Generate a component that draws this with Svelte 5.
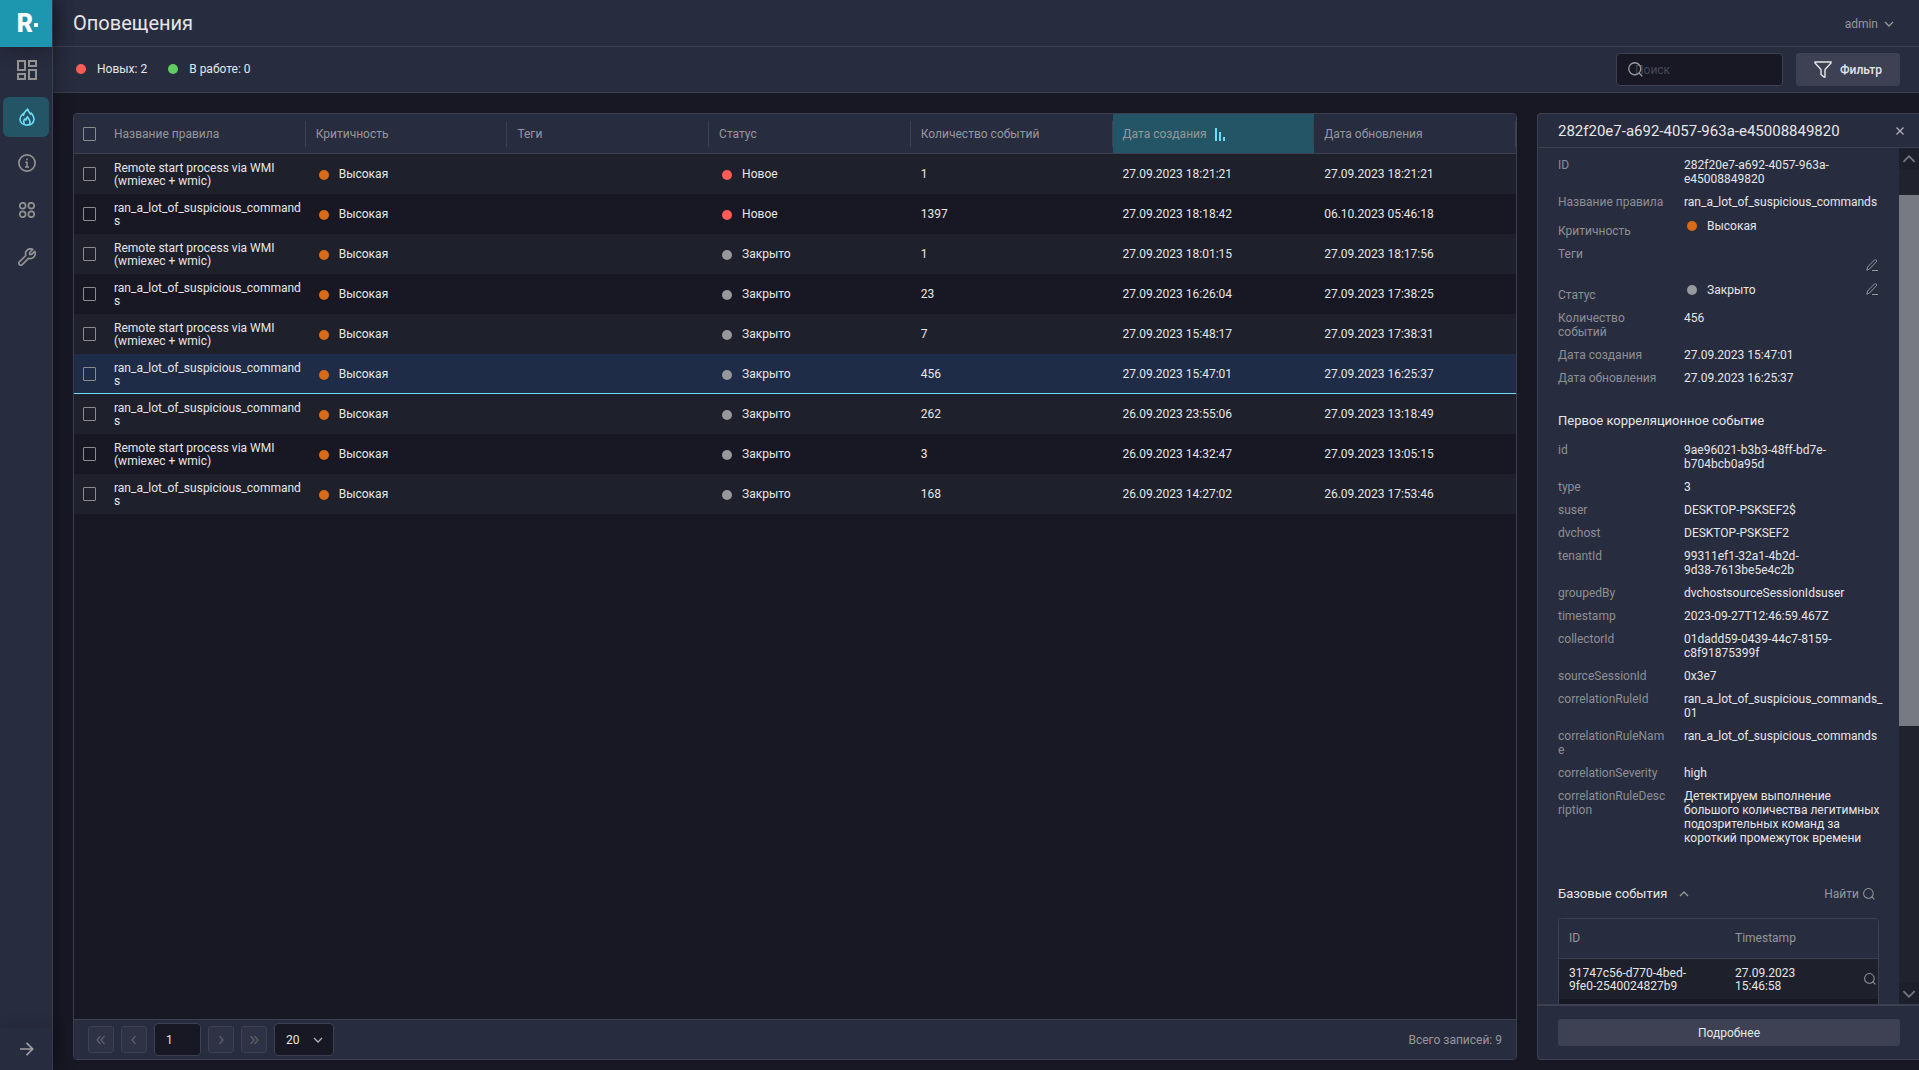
<script>
	const columns = ["Название правила", "Критичность", "Теги", "Статус", "Количество событий", "Дата создания", "Дата обновления"];
	const sortedColumn = "Дата создания";

	const wmi = "Remote start process via WMI (wmiexec + wmic)";
	const commands = "ran_a_lot_of_suspicious_commands";

	const alerts = [
		{ rule: wmi, status: "Новое", count: 1, created: "27.09.2023 18:21:21", updated: "27.09.2023 18:21:21" },
		{ rule: commands, status: "Новое", count: 1397, created: "27.09.2023 18:18:42", updated: "06.10.2023 05:46:18" },
		{ rule: wmi, status: "Закрыто", count: 1, created: "27.09.2023 18:01:15", updated: "27.09.2023 18:17:56" },
		{ rule: commands, status: "Закрыто", count: 23, created: "27.09.2023 16:26:04", updated: "27.09.2023 17:38:25" },
		{ rule: wmi, status: "Закрыто", count: 7, created: "27.09.2023 15:48:17", updated: "27.09.2023 17:38:31" },
		{ rule: commands, status: "Закрыто", count: 456, created: "27.09.2023 15:47:01", updated: "27.09.2023 16:25:37" },
		{ rule: commands, status: "Закрыто", count: 262, created: "26.09.2023 23:55:06", updated: "27.09.2023 13:18:49" },
		{ rule: wmi, status: "Закрыто", count: 3, created: "26.09.2023 14:32:47", updated: "27.09.2023 13:05:15" },
		{ rule: commands, status: "Закрыто", count: 168, created: "26.09.2023 14:27:02", updated: "26.09.2023 17:53:46" }
	];

	const correlation = [
		["id", "9ae96021-b3b3-48ff-bd7e-b704bcb0a95d"],
		["type", "3"],
		["suser", "DESKTOP-PSKSEF2$"],
		["dvchost", "DESKTOP-PSKSEF2"],
		["tenantId", "99311ef1-32a1-4b2d-\n9d38-7613be5e4c2b"],
		["groupedBy", "dvchostsourceSessionIdsuser"],
		["timestamp", "2023-09-27T12:46:59.467Z"],
		["collectorId", "01dadd59-0439-44c7-8159-c8f91875399f"],
		["sourceSessionId", "0x3e7"],
		["correlationRuleId", "ran_a_lot_of_suspicious_commands_01"],
		["correlationRuleName", "ran_a_lot_of_suspicious_commands"],
		["correlationSeverity", "high"],
		["correlationRuleDescription", "Детектируем выполнение большого количества легитимных подозрительных команд за короткий промежуток времени"]
	];

	let selected = $state(5);
	let page = $state("1");
	let pageSize = $state("20");
	let search = $state("");
</script>

{#snippet chevron(path, size = 10)}
	<svg width={size} height={size} viewBox="0 0 10 10" fill="none" stroke="currentColor" stroke-width="1.3"><path d={path} /></svg>
{/snippet}

{#snippet loupe(size)}
	<svg width={size} height={size} viewBox="0 0 14 14" fill="none" stroke="currentColor" stroke-width="1.2"><circle cx="6.3" cy="6.3" r="5.6" /><path d="M10.3 10.3L13.3 13.3" /></svg>
{/snippet}

{#snippet pencil()}
	<svg width="12" height="12" viewBox="0 0 12 12" fill="none" stroke="currentColor"><path d="M.8 11.2L1.5 8 8.6 .9Q9.4 .3 10.3 1.1 11.1 2 10.4 2.8L3.4 10.1ZM6 11.5H12" /></svg>
{/snippet}

<div class="app">
	<nav class="sidebar">
		<a class="logo" href="#home" aria-label="Главная"><span>R</span><i></i></a>
		<a class="item" href="#dashboard" aria-label="Дашборд">
			<svg width="20" height="20" viewBox="0 0 20 20" fill="none" stroke="currentColor" stroke-width="2"><path d="M1 1H8V10H1ZM12 1H19V6H12ZM12 10H19V19H12ZM1 14H8V19H1Z" /></svg>
		</a>
		<a class="item active" href="#alerts" aria-label="Оповещения">
			<svg width="16" height="18" viewBox="0 0 16 18" fill="none" stroke="currentColor" stroke-width="1.6" stroke-linejoin="round">
				<path d="M8.6 1C9.2 4 11 4.2 11.4 6.2L12.5 5.2C13.8 7 15.1 8.8 15 11.2 14.8 14.8 12 17.1 8 17.1 4 17.1 1.1 14.8 1 11.2 1 9 2 7.6 3.4 6.2L4.5 7.2C4.6 4.2 6.8 3.2 8.6 1Z" />
				<path d="M5.6 16.5C4.3 14 4.8 11.8 6 11L7 12C7 10.6 7.5 9.6 8.5 8.8 9 10.8 11 11.5 11 13.8 11 15 10.8 15.7 10.3 16.5" />
			</svg>
		</a>
		<a class="item" href="#info" aria-label="Информация">
			<svg width="18" height="18" viewBox="0 0 18 18" fill="none" stroke="currentColor" stroke-width="1.7"><circle cx="9" cy="9" r="8.1" /><path d="M9 4.6V6.3M7.3 8.3H9V13M7 13H11" stroke-width="1.5" /></svg>
		</a>
		<a class="item" href="#sources" aria-label="Источники">
			<svg width="16" height="16" viewBox="0 0 16 16" fill="none" stroke="currentColor" stroke-width="1.7"><circle cx="3.7" cy="3.7" r="2.9" /><circle cx="12.3" cy="3.7" r="2.9" /><circle cx="3.7" cy="12.3" r="2.9" /><circle cx="12.3" cy="12.3" r="2.9" /></svg>
		</a>
		<a class="item" href="#settings" aria-label="Настройки">
			<svg width="18" height="18" viewBox="0 0 18 18" fill="none" stroke="currentColor" stroke-width="1.7" stroke-linejoin="round"><path d="M14.8 1.4L11.7 4.5V6.4H13.6L16.7 3.3C17.7 5.6 17.2 7.7 15.7 9.2 14.2 10.6 12.3 10.9 10.5 10.3L4.2 16.6C3.3 17.5 2.2 17.4 1.4 16.6 .6 15.8 .6 14.7 1.4 13.8L7.8 7.5C7.2 5.7 7.5 3.8 8.9 2.3 10.5 .7 12.7 .4 14.8 1.4Z" /></svg>
		</a>
		<button class="expand" aria-label="Развернуть">
			<svg width="14" height="14" viewBox="0 0 14 14" fill="none" stroke="currentColor" stroke-width="1.7"><path d="M0 7H13M6.5 .8L12.7 7 6.5 13.2" /></svg>
		</button>
	</nav>

	<div class="page">
		<header class="top">
			<h1>Оповещения</h1>
			<button class="user">admin {@render chevron("M1 3L5 7 9 3")}</button>
		</header>

		<div class="toolbar">
			<div class="legend"><i class="dot new"></i>Новых: 2</div>
			<div class="legend"><i class="dot work"></i>В работе: 0</div>
			<label class="search">
				{@render loupe(15)}
				<input type="text" placeholder="Поиск" bind:value={search} />
			</label>
			<button class="filter">
				<svg width="18" height="17" viewBox="0 0 18 17" fill="none" stroke="currentColor" stroke-width="1.4"><path d="M1 1H17V2L11 8.5V16H10L7 13.5V8.5L1 2Z" /></svg>
				Фильтр
			</button>
		</div>

		<div class="content">
			<main class="panel">
				<div class="scroll">
					<table class="alerts">
						<thead>
							<tr>
								<th class="check"><input type="checkbox" aria-label="Выбрать все" /></th>
								{#each columns as column}
									<th class:sorted={column === sortedColumn}>
										<div class="head">
											{column}
											{#if column === sortedColumn}
												<svg width="10" height="13" viewBox="0 0 10 13" fill="#6fdcf5"><path d="M0 0H2V13H0ZM4 4H6V13H4ZM8 9H10V13H8Z" /></svg>
											{/if}
										</div>
									</th>
								{/each}
							</tr>
						</thead>
						<tbody>
							{#each alerts as alert, i}
								<tr class:selected={i === selected} onclick={() => selected = i}>
									<td class="check"><input type="checkbox" aria-label={alert.rule} /></td>
									<td class="rule">{alert.rule}</td>
									<td><div class="state"><i class="dot high"></i>Высокая</div></td>
									<td></td>
									<td><div class="state"><i class="dot" class:new={alert.status === "Новое"}></i>{alert.status}</div></td>
									<td>{alert.count}</td>
									<td>{alert.created}</td>
									<td>{alert.updated}</td>
								</tr>
							{/each}
						</tbody>
					</table>
				</div>
				<footer class="pager">
					<button disabled aria-label="Первая">{@render chevron("M4.5 1L1 5 4.5 9M8.5 1L5 5 8.5 9")}</button>
					<button disabled aria-label="Назад">{@render chevron("M6.5 1L3 5 6.5 9")}</button>
					<input type="text" aria-label="Страница" bind:value={page} />
					<button disabled aria-label="Вперёд">{@render chevron("M3.5 1L7 5 3.5 9")}</button>
					<button disabled aria-label="Последняя">{@render chevron("M1.5 1L5 5 1.5 9M5.5 1L9 5 5.5 9")}</button>
					<div class="size">
						<select aria-label="Записей на странице" bind:value={pageSize}>
							<option>20</option>
							<option>50</option>
							<option>100</option>
						</select>
						{@render chevron("M1 3L5 7 9 3")}
					</div>
					<span class="total">Всего записей: 9</span>
				</footer>
			</main>

			<aside class="details">
				<div class="details-head">
					<h2>282f20e7-a692-4057-963a-e45008849820</h2>
					<button aria-label="Закрыть">{@render chevron("M1.5 1.5L8.5 8.5M8.5 1.5L1.5 8.5")}</button>
				</div>
				<div class="details-body">
					<div class="fields">
						<dl>
							<div><dt>ID</dt><dd>282f20e7-a692-4057-963a-e45008849820</dd></div>
							<div><dt>Название правила</dt><dd>ran_a_lot_of_suspicious_commands</dd></div>
							<div class="low"><dt>Критичность</dt><dd class="state"><i class="dot high"></i>Высокая</dd></div>
							<div class="tags"><dt>Теги</dt><dd><button class="edit" aria-label="Изменить теги">{@render pencil()}</button></dd></div>
							<div class="low"><dt>Статус</dt><dd class="state"><i class="dot"></i>Закрыто<button class="edit" aria-label="Изменить статус">{@render pencil()}</button></dd></div>
							<div><dt>Количество событий</dt><dd>456</dd></div>
							<div><dt>Дата создания</dt><dd>27.09.2023 15:47:01</dd></div>
							<div><dt>Дата обновления</dt><dd>27.09.2023 16:25:37</dd></div>
						</dl>
						<h3>Первое корреляционное событие</h3>
						<dl>
							{#each correlation as [name, value]}
								<div><dt>{name}</dt><dd>{value}</dd></div>
							{/each}
						</dl>
						<div class="base-head">
							<h3>Базовые события</h3>
							<button aria-label="Свернуть">{@render chevron("M1 7L5 3 9 7")}</button>
							<button class="find">Найти {@render loupe(12)}</button>
						</div>
						<div class="base-box">
							<table class="base">
								<thead>
									<tr><th>ID</th><th>Timestamp</th><th class="action"></th></tr>
								</thead>
								<tbody>
									<tr>
										<td>31747c56-d770-4bed-9fe0-2540024827b9</td>
										<td>27.09.2023 15:46:58</td>
										<td class="action"><button aria-label="Открыть событие">{@render loupe(12)}</button></td>
									</tr>
									<tr><td></td><td></td><td class="action"></td></tr>
								</tbody>
							</table>
						</div>
					</div>
					<div class="scrollbar">
						<div class="arrow">{@render chevron("M1 7L5 3 9 7", 14)}</div>
						<div class="thumb"></div>
						<div class="arrow">{@render chevron("M1 3L5 7 9 3", 14)}</div>
					</div>
				</div>
				<div class="details-foot"><button>Подробнее</button></div>
			</aside>
		</div>
	</div>
</div>

<style>
	:global(body) {
		background: #171824;
	}

	.app {
		display: flex;
		height: 100vh;
		overflow: hidden;
		font: 12px/14px Roboto, "Noto Sans", sans-serif;
		color: #e6e6e6;
	}

	.app * {
		box-sizing: border-box;
	}

	h1, h2, h3, dl, dd {
		margin: 0;
		font-weight: 400;
	}

	svg {
		flex: none;
		display: block;
	}

	button, input, select {
		font: inherit;
		color: inherit;
		margin: 0;
	}

	button {
		display: flex;
		align-items: center;
		justify-content: center;
		background: none;
		border: 0;
		padding: 0;
	}

	/* sidebar */
	.sidebar {
		display: flex;
		flex-direction: column;
		align-items: center;
		flex: none;
		width: 53px;
		background: #282c3f;
		border-right: 1px solid #3d4050;
		box-shadow: 0 0 20px rgba(0, 0, 0, 0.4);
		z-index: 1;
	}

	.logo {
		display: flex;
		align-items: center;
		justify-content: center;
		width: 100%;
		height: 47px;
		margin-bottom: 3px;
		padding-left: 3px;
		background: #1d97b0;
		box-shadow: 0 0 20px rgba(0, 0, 0, 0.4);
		color: #fff;
		font-size: 25px;
		font-weight: 900;
		text-decoration: none;
	}

	.logo i {
		width: 4px;
		height: 4px;
		margin-left: 1px;
		margin-top: 3px;
		background: #fff;
	}

	.item {
		display: flex;
		align-items: center;
		justify-content: center;
		width: 46px;
		height: 40px;
		margin-bottom: 7px;
		padding-left: 2px;
		border-radius: 6px;
		color: #929292;
	}

	.item.active {
		margin-bottom: 6px;
		background: #235567;
		color: #6fdcf5;
	}

	.expand {
		width: 100%;
		height: 42px;
		margin-top: auto;
		padding-left: 2px;
		box-shadow: 0 0 16px rgba(0, 0, 0, 0.15);
		color: #a0a0a2;
	}

	/* page */
	.page {
		display: flex;
		flex-direction: column;
		flex: 1;
		min-width: 0;
	}

	.top, .toolbar {
		display: flex;
		align-items: center;
		height: 47px;
		flex: none;
		padding: 0 19px 0 20px;
		background: #282c3f;
		border-bottom: 1px solid #3d4050;
	}

	.toolbar {
		height: 46px;
	}

	h1 {
		font-size: 20px;
		line-height: 24px;
	}

	.user {
		gap: 6px;
		margin-left: auto;
		margin-right: 6px;
		padding-top: 2px;
		color: #96979b;
	}

	.dot {
		flex: none;
		width: 10px;
		height: 10px;
		border-radius: 50%;
		background: #97989c;
	}

	.dot.new {
		background: #ff5c57;
	}

	.dot.work {
		background: #62cc62;
	}

	.dot.high {
		background: #d96a16;
	}

	.legend {
		display: flex;
		align-items: center;
		gap: 11px;
		padding: 0 0 2px 3px;
		margin-right: 18px;
	}

	.search {
		display: flex;
		align-items: center;
		position: relative;
		width: 167px;
		height: 33px;
		margin-left: auto;
		margin-right: 13px;
		color: #9a9a9e;
	}

	.search svg {
		position: absolute;
		left: 12px;
	}

	.search input {
		width: 100%;
		height: 100%;
		padding: 0 18px;
		background: #171824;
		border: 1px solid #3d4050;
		border-radius: 4px;
	}

	.search input::placeholder {
		color: #454856;
		opacity: 1;
	}

	.filter {
		gap: 8px;
		width: 104px;
		height: 33px;
		background: #3d4153;
		border-radius: 3px;
		font-weight: 500;
	}

	.content {
		display: flex;
		flex: 1;
		gap: 20px;
		min-height: 0;
		padding: 20px 0 10px 20px;
	}

	.panel {
		display: flex;
		flex-direction: column;
		flex: 1;
		min-width: 0;
		border: 1px solid #3d4050;
		border-radius: 4px;
		overflow: hidden;
	}

	.scroll {
		flex: 1;
		min-height: 0;
		overflow: hidden;
	}

	table {
		width: 100%;
		table-layout: fixed;
		border-collapse: separate;
		border-spacing: 0;
		line-height: 13px;
	}

	th {
		height: 40px;
		padding: 0;
		background: #282c3f;
		border-bottom: 1px solid #3d4050;
		color: #96979b;
		font-weight: 400;
		text-align: left;
	}

	.head {
		display: flex;
		align-items: center;
		gap: 8px;
		height: 26px;
		padding: 1px 0 0 10px;
		border-right: 1px solid #3d4050;
	}

	th.sorted {
		background: #235567;
	}

	td {
		height: 40px;
		padding: 1px 10px 0;
		overflow-wrap: anywhere;
	}

	.rule {
		padding-right: 4px;
	}

	tbody tr {
		background: #171824;
	}

	tbody tr:nth-child(odd) {
		background: #1e202c;
	}

	tbody tr.selected {
		background: #1e2c47;
	}

	.selected td {
		box-shadow: inset 0 -1px #6fdcf5;
	}

	.check {
		width: 30px;
		padding: 0 0 0 9px;
	}

	input[type="checkbox"] {
		display: block;
		appearance: none;
		width: 13px;
		height: 14px;
		border: 1px solid #8a8a8a;
		border-radius: 1px;
	}

	.state {
		display: flex;
		align-items: center;
		gap: 10px;
		padding-left: 3px;
	}

	.pager {
		display: flex;
		align-items: center;
		gap: 7px;
		height: 40px;
		padding: 0 14px;
		background: #282c3f;
		border-top: 1px solid #3d4050;
	}

	.pager button {
		width: 26px;
		height: 27px;
		background: #2e3244;
		border: 1px solid #3d4050;
		border-radius: 3px;
		color: #5d5e66;
	}

	.pager input, .pager select {
		width: 47px;
		height: 33px;
		padding: 0 11px;
		background: #171824;
		border: 1px solid #3d4050;
		border-radius: 4px;
	}

	.size {
		display: flex;
		align-items: center;
		position: relative;
	}

	.pager select {
		appearance: none;
		width: 60px;
	}

	.size svg {
		position: absolute;
		right: 11px;
		pointer-events: none;
		color: #b0b0b4;
	}

	.total {
		margin-left: auto;
		color: #96979b;
	}

	/* details */
	.details {
		display: flex;
		flex-direction: column;
		flex: none;
		width: 382px;
		background: #282c3f;
		border: 1px solid #3d4050;
		border-right: 0;
		border-radius: 4px 0 0 4px;
		overflow: hidden;
	}

	.details-head {
		display: flex;
		align-items: center;
		justify-content: space-between;
		flex: none;
		height: 34px;
		padding: 0 14px 0 20px;
		border-bottom: 1px solid #3d4050;
	}

	.details-head button {
		color: #b0b0b4;
	}

	h2 {
		font-size: 15px;
		line-height: 18px;
	}

	.details-body {
		display: flex;
		flex: 1;
		min-height: 0;
	}

	.fields {
		flex: 1;
		min-width: 0;
		padding: 10px 12px 0 20px;
		overflow: hidden;
	}

	dl {
		display: flex;
		flex-direction: column;
		gap: 9px;
	}

	dl > div {
		display: grid;
		grid-template-columns: 110px 1fr;
		gap: 16px;
	}

	dt {
		color: #8e8f94;
		overflow-wrap: anywhere;
	}

	dd {
		overflow-wrap: anywhere;
		white-space: pre-line;
	}

	dl > .low {
		min-height: 20px;
	}

	.low dt {
		align-self: end;
	}

	.low dd {
		align-self: start;
		height: 16px;
	}

	dl > .tags {
		min-height: 26px;
	}

	.tags dd {
		display: flex;
		align-items: end;
	}

	.edit {
		margin-left: auto;
		margin-right: 9px;
		padding-bottom: 2px;
		color: #96979b;
	}

	h3 {
		font-size: 13px;
		line-height: 16px;
		margin: 28px 0 14px;
	}

	.base-head {
		display: flex;
		align-items: center;
		gap: 12px;
		margin: 41px 8px 16px 0;
		color: #96979b;
	}

	.base-head h3 {
		margin: 0;
		color: #e6e6e6;
	}

	.find {
		gap: 4px;
		margin-left: auto;
		margin-right: 4px;
	}

	.base-box {
		margin-right: 8px;
		border: 1px solid #3d4050;
		border-radius: 4px;
		overflow: hidden;
	}

	.base th {
		padding: 0 10px;
	}

	.base .action {
		width: 24px;
		padding: 0 2px 0 0;
	}

	.base .action button {
		margin-left: auto;
		color: #96979b;
	}

	.base th:first-child {
		width: 166px;
	}

	.base td:first-child {
		padding-right: 30px;
	}

	.base td:nth-child(2) {
		padding-right: 50px;
	}

	.scrollbar {
		display: flex;
		flex-direction: column;
		flex: none;
		width: 20px;
		background: #20222e;
	}

	.arrow {
		display: flex;
		align-items: center;
		justify-content: center;
		height: 21px;
		background: #1d1f2a;
		color: #777982;
	}

	.arrow:last-child {
		margin-top: auto;
	}

	.thumb {
		height: 62%;
		margin-top: 26px;
		background: #787a83;
	}

	.details-foot {
		flex: none;
		padding: 13px 19px 13px 20px;
		border-top: 2px solid #3d4050;
	}

	.details-foot button {
		width: 100%;
		height: 27px;
		background: #3d4153;
		border-radius: 3px;
	}
</style>
